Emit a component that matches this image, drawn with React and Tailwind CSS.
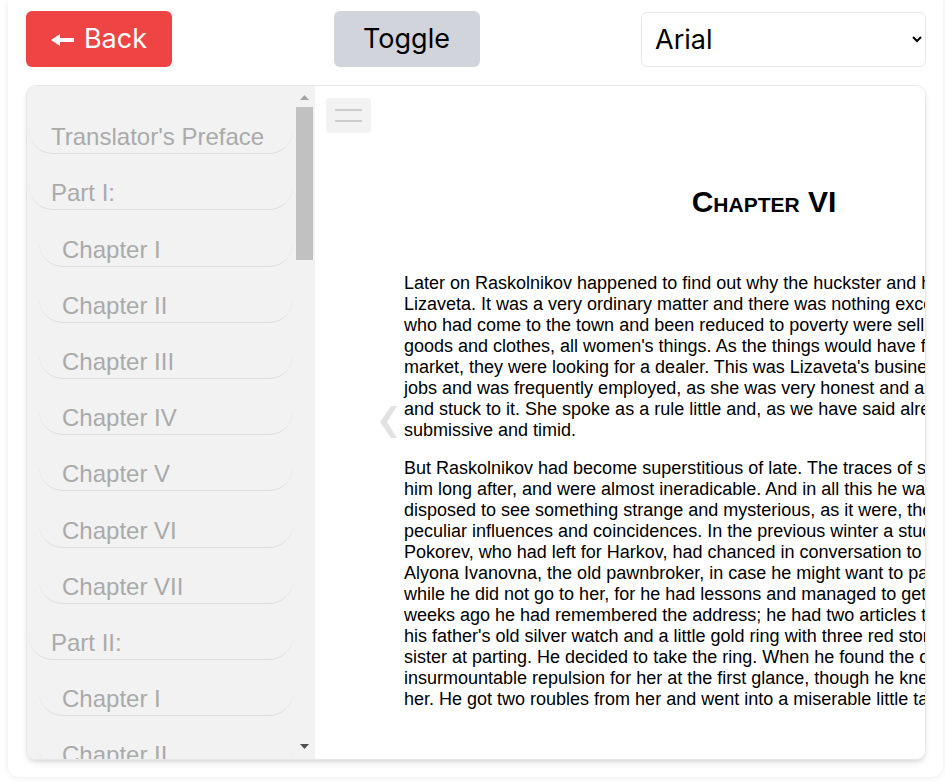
import React, { useState } from 'react';

const parts = [
    { title: 'Part I:', chapters: 7 },
    { title: 'Part II:', chapters: 7 },
    { title: 'Part III:', chapters: 6 },
    { title: 'Part IV:', chapters: 6 },
    { title: 'Part V:', chapters: 5 },
    { title: 'Part VI:', chapters: 8 },
    { title: 'Epilogue:', chapters: 2 },
];

const roman = ['I', 'II', 'III', 'IV', 'V', 'VI', 'VII', 'VIII'];

const toc = [{ label: "Translator's Preface", sub: false }];
parts.forEach((p) => {
    toc.push({ label: p.title, sub: false });
    for (let i = 0; i < p.chapters; i++) {
        toc.push({ label: `Chapter ${roman[i]}`, sub: true });
    }
});

const paragraphs = [
    "Later on Raskolnikov happened to find out why the huckster and his wife had invited Lizaveta. It was a very ordinary matter and there was nothing exceptional about it. A family who had come to the town and been reduced to poverty were selling their household goods and clothes, all women's things. As the things would have fetched little in the market, they were looking for a dealer. This was Lizaveta's business. She undertook such jobs and was frequently employed, as she was very honest and always fixed a fair price and stuck to it. She spoke as a rule little and, as we have said already, she was very submissive and timid.",
    "But Raskolnikov had become superstitious of late. The traces of superstition remained in him long after, and were almost ineradicable. And in all this he was always afterwards disposed to see something strange and mysterious, as it were, the presence of some peculiar influences and coincidences. In the previous winter a student he knew called Pokorev, who had left for Harkov, had chanced in conversation to give him the address of Alyona Ivanovna, the old pawnbroker, in case he might want to pawn anything. For a long while he did not go to her, for he had lessons and managed to get along somehow. Six weeks ago he had remembered the address; he had two articles that could be pawned: his father's old silver watch and a little gold ring with three red stones, a present from his sister at parting. He decided to take the ring. When he found the old woman he had felt an insurmountable repulsion for her at the first glance, though he knew nothing special about her. He got two roubles from her and went into a miserable little tavern on his way home.",
];

const App = () => {
    const [showToc, setShowToc] = useState(true);
    const [font, setFont] = useState('Arial');

    return (
        <div className="min-h-screen bg-white font-['Inter',sans-serif]">
            <div className="ml-2 w-[935px] h-[777px] rounded-b-xl bg-white shadow-[0_0_9px_rgba(0,0,0,0.09)] pt-[11px] pl-[18px] pr-[17px] flex flex-col">
                <div className="flex items-start justify-between">
                    <button className="w-[146px] h-[56px] rounded-md bg-[#ef4444] text-white text-[27px] flex items-center justify-center gap-[10px]">
                        <svg width="23" height="12" viewBox="0 0 23 12" className="mt-px">
                            <polygon points="0,6 9,0 9,4 23,4 23,8 9,8 9,12" fill="currentColor" />
                        </svg>
                        <span>Back</span>
                    </button>
                    <button
                        onClick={() => setShowToc(!showToc)}
                        className="w-[146px] h-[56px] rounded-md bg-[#d1d5db] text-black text-[27px]"
                    >
                        Toggle
                    </button>
                    <select
                        value={font}
                        onChange={(e) => setFont(e.target.value)}
                        className="mt-px w-[285px] h-[55px] rounded-md border border-gray-200 bg-white pl-[9px] pr-[12px] text-[27px] text-black"
                    >
                        <option>Arial</option>
                        <option>Georgia</option>
                        <option>Times New Roman</option>
                    </select>
                </div>

                <div className="mt-[18px] h-[675px] flex rounded-[10px] border border-gray-200 shadow-md overflow-hidden">
                    {showToc && (
                        <div className="w-[288px] shrink-0 bg-[#f2f2f2] flex pr-[2px]">
                            <div className="flex-1 overflow-hidden pt-[12px] font-['Liberation_Sans',Arial,sans-serif]">
                                {toc.map((item, idx) => (
                                    <div
                                        key={idx}
                                        className={`${item.sub ? 'ml-[12px] pl-[23px]' : 'ml-[2px] pl-[22px]'} mr-[3px] pt-[25.2px] pb-[2px] rounded-[24px] border-b border-[#ddd] text-[24px] leading-[28px] text-[#aaa] whitespace-nowrap`}
                                    >
                                        {item.label}
                                    </div>
                                ))}
                            </div>
                            {/* scrollbar */}
                            <div className="w-[17px] flex flex-col items-center pt-[9px] pb-[10px]">
                                <svg width="9" height="5" viewBox="0 0 9 5">
                                    <polygon points="0,5 4.5,0 9,5" fill="#a3a3a3" />
                                </svg>
                                <div className="mt-[7px] w-full h-[153px] bg-[#c1c1c1]"></div>
                                <div className="flex-1"></div>
                                <svg width="9" height="5" viewBox="0 0 9 5">
                                    <polygon points="0,0 9,0 4.5,5" fill="#505050" />
                                </svg>
                            </div>
                        </div>
                    )}

                    <div className="relative flex-1 bg-white overflow-hidden">
                        <button className="absolute top-[12px] left-[11px] w-[45px] h-[35px] rounded bg-[#f2f2f2] flex flex-col items-center justify-center gap-[9px]">
                            <span className="block w-[27px] h-[2px] bg-[#ccc]"></span>
                            <span className="block w-[27px] h-[2px] bg-[#ccc]"></span>
                        </button>

                        <svg className="absolute left-[64px] top-[319px]" width="19" height="34" viewBox="0 0 19 34">
                            <polygon points="1,17 12,1 18,1 8,17 18,33 12,33" fill="#e2e2e2" />
                        </svg>

                        <div className="pl-[89px] pt-[98px] w-[809px] font-['Liberation_Sans',Arial,sans-serif] text-black">
                            <div className="w-[720px]">
                                <h2 className="text-center text-[30px] leading-[36px] font-bold [font-variant:small-caps]">
                                    Chapter VI
                                </h2>
                                <p className="mt-[53px] text-[18px] leading-[21px]">{paragraphs[0]}</p>
                                <p className="mt-[17px] text-[18px] leading-[21px]">{paragraphs[1]}</p>
                            </div>
                        </div>
                    </div>
                </div>
            </div>
        </div>
    );
};

export default App;
